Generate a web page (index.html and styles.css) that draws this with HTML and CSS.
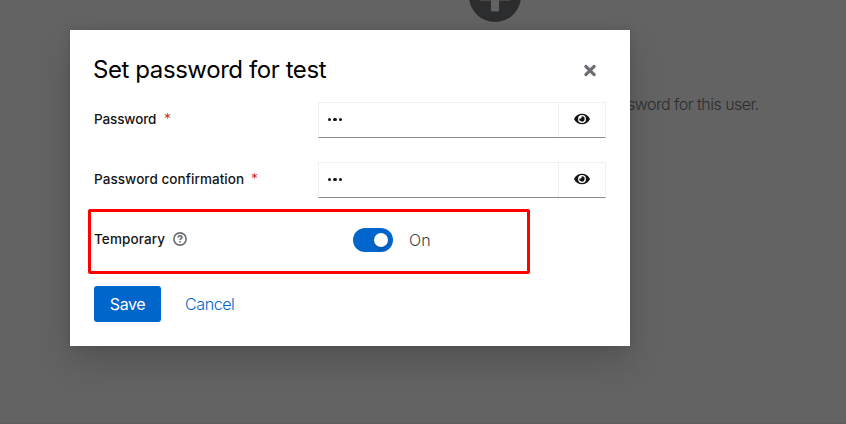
FILE: index.html
```html
<!DOCTYPE html>
<html lang="en">
<head>
<meta charset="utf-8">
<title>Set password</title>
<link rel="stylesheet" href="styles.css">
</head>
<body>
<main class="page">
  <svg class="empty-icon" viewBox="0 0 52 52"><circle cx="26" cy="26" r="26" fill="#2c2d2f"/><path d="M11 22.500h11v-11.500h8v11.500h11v8h-11v10q0 1-1 1h-6q-1 0-1-1v-10h-11z" fill="#636363"/></svg>
  <p class="empty-text">sword for this user.</p>
</main>
<section class="modal">
  <header class="modal-header">
    <h1 class="title">Set password for test</h1>
    <button class="close" aria-label="Close"><svg viewBox="0 0 352 512"><path d="M242.720 256l100.070-100.070c12.280-12.280 12.280-32.190 0-44.480l-22.240-22.240c-12.280-12.280-32.190-12.280-44.480 0L176 189.280 75.930 89.210c-12.280-12.280-32.190-12.280-44.480 0L9.210 111.450c-12.280 12.280-12.280 32.190 0 44.480L109.280 256 9.210 356.070c-12.280 12.280-12.280 32.190 0 44.480l22.240 22.240c12.280 12.280 32.200 12.280 44.480 0L176 322.720l100.070 100.070c12.280 12.280 32.200 12.280 44.480 0l22.240-22.240c12.280-12.280 12.280-32.190 0-44.480L242.720 256z"/></svg></button>
  </header>
  <form class="form">
    <div class="row">
      <label class="label"><span class="label-text l-password">Password</span><span class="required">*</span></label>
      <div class="field"><span class="value"><i></i><i></i><i></i></span><span class="reveal"><svg viewBox="0 0 576 512"><path d="M572.520 241.400C518.290 135.590 410.930 64 288 64S57.680 135.640 3.480 241.410a32.350 32.350 0 0 0 0 29.190C57.710 376.410 165.070 448 288 448s230.320-71.640 284.520-177.410a32.350 32.350 0 0 0 0-29.190zM288 400a144 144 0 1 1 144-144 143.930 143.930 0 0 1-144 144zm0-240a95.310 95.310 0 0 0-25.310 3.790 47.850 47.850 0 0 1-66.900 66.900A95.780 95.780 0 1 0 288 160z"/></svg></span></div>
    </div>
    <div class="row">
      <label class="label"><span class="label-text l-confirm">Password confirmation</span><span class="required">*</span></label>
      <div class="field"><span class="value"><i></i><i></i><i></i></span><span class="reveal"><svg viewBox="0 0 576 512"><path d="M572.520 241.400C518.290 135.590 410.930 64 288 64S57.680 135.640 3.480 241.410a32.350 32.350 0 0 0 0 29.190C57.710 376.410 165.070 448 288 448s230.320-71.640 284.520-177.410a32.350 32.350 0 0 0 0-29.190zM288 400a144 144 0 1 1 144-144 143.930 143.930 0 0 1-144 144zm0-240a95.310 95.310 0 0 0-25.310 3.790 47.850 47.850 0 0 1-66.900 66.900A95.780 95.780 0 1 0 288 160z"/></svg></span></div>
    </div>
    <div class="row">
      <label class="label"><span class="label-text l-temp">Temporary</span><svg class="help" viewBox="0 0 14 14"><circle cx="7" cy="7" r="6.100"/><path d="M5.100 5.600C5.200 4.500 6 3.900 7 3.900c1.100 0 1.900.6 1.900 1.600C8.900 6.700 7.100 6.700 7.100 8"/><path d="M7.100 9.100v1.300"/></svg></label>
      <div class="switch"><span class="toggle"></span><span class="state">On</span></div>
    </div>
    <div class="actions">
      <button class="save" type="button"><span>Save</span></button>
      <button class="cancel" type="button"><span>Cancel</span></button>
    </div>
  </form>
  <div class="highlight"></div>
</section>
</body>
</html>
```
FILE: styles.css
```css
* { box-sizing: border-box; }
body {
  margin: 0;
  height: 424px;
  overflow: hidden;
  position: relative;
  background: #636363;
  color: #151515;
  font-family: Inter, "Liberation Sans", sans-serif;
}
button { border: 0; padding: 0; background: none; font: inherit; }
.page { height: 424px; overflow: hidden; border-bottom: 1px solid #605d5d; }
.empty-icon { display: block; width: 52px; height: 52px; margin: -30px 0 0 469px; }
.empty-text {
  margin: 70px 0 0 627px;
  font: 300 16px/24px Inter, sans-serif;
  letter-spacing: -0.5px;
  color: #2c2d2f;
  white-space: nowrap;
}
.modal {
  position: absolute;
  left: 70px;
  top: 30px;
  width: 560px;
  height: 316px;
  padding: 24px;
  background: #fff;
  box-shadow: 0 16px 32px rgba(3, 3, 3, .16), 0 0 8px rgba(3, 3, 3, .1);
}
.modal-header { display: flex; justify-content: space-between; height: 48px; }
.title { margin: 0 0 0 -1px; font-size: 24px; line-height: 31px; font-weight: 400; letter-spacing: -0.42px; color: #000; white-space: nowrap; }
.close { width: 32px; height: 32px; display: flex; align-items: center; justify-content: center; }
.close svg { width: 12px; height: 17px; fill: #6a6e73; }
.row { display: grid; grid-template-columns: 224px 288px; height: 36px; margin-bottom: 24px; }
.label { display: flex; align-items: center; padding-bottom: 2px; white-space: nowrap; }
.label-text { font-size: 13.5px; line-height: 20px; font-weight: 450; }
.l-password { width: 62px; letter-spacing: -0.13px; }
.l-confirm { width: 149px; letter-spacing: 0.07px; }
.l-temp { width: 71px; letter-spacing: 0.1px; }
.required { margin-left: 8px; font-size: 14px; line-height: 18px; font-weight: 300; color: #c9190b; }
.field { display: flex; border: 1px solid #f0f0f0; border-bottom-color: #8a8d90; }
.value { flex: 1; display: flex; align-items: center; gap: 2.3px; padding-left: 9px; padding-bottom: 1px; }
.value i { width: 3.2px; height: 3.2px; border-radius: 50%; background: #151515; }
.reveal { width: 47px; border-left: 1px solid #f0f0f0; display: flex; align-items: center; justify-content: center; padding-bottom: 2px; }
.reveal svg { width: 16px; height: 14px; fill: #151515; }
.help { width: 14px; height: 14px; margin-left: 8px; fill: none; stroke: #6a6e73; stroke-width: 1.6; }
.switch { display: flex; align-items: center; padding-left: 35px; }
.toggle { display: flex; justify-content: flex-end; align-items: center; width: 40px; height: 24px; padding-right: 5px; border-radius: 12px; background: #06c; }
.toggle::after { content: ""; width: 14px; height: 14px; border-radius: 50%; background: #fff; box-shadow: 0 2px 4px rgba(3, 3, 3, .2); }
.state { margin-left: 16px; font-size: 16px; font-weight: 300; color: #3c3f42; }
.actions { display: flex; padding-top: 4px; }
.save { width: 67px; height: 36px; border-radius: 3px; background: #06c; color: #fff; font-size: 16px; letter-spacing: -0.4px; }
.cancel { height: 36px; margin-left: 24px; color: #06c; font-size: 16px; font-weight: 300; letter-spacing: -0.4px; }
.highlight { position: absolute; left: 18px; top: 179px; width: 442px; height: 65px; border: 3px solid #f00; border-radius: 2px; }
```
